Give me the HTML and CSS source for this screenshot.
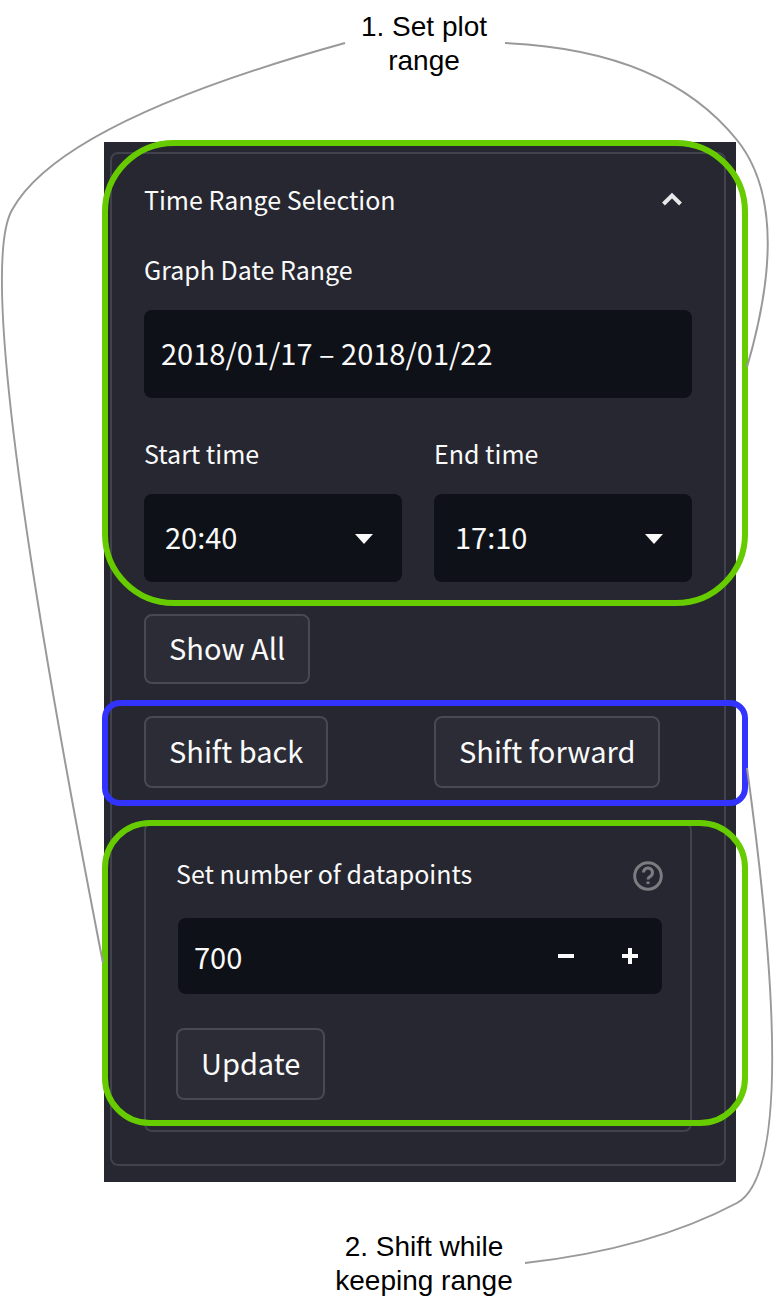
FILE: index.html
```html
<!DOCTYPE html>
<html lang="en">
<head>
<meta charset="utf-8">
<title>Time Range Selection</title>
<link rel="stylesheet" href="styles.css">
</head>
<body>
<main class="diagram">
  <p class="note note-top">1. Set plot range</p>

  <div class="sidebar">
    <details class="expander" open>
      <summary class="expander-head">
        <span>Time Range Selection</span>
        <svg class="chevron" viewBox="0 0 24 16" aria-hidden="true"><path d="M3.5 13 12 4.500l8.500 8.500" /></svg>
      </summary>

      <div class="expander-body">
        <section class="group">
          <label class="label" for="dates">Graph Date Range</label>
          <input class="field date-field" id="dates" type="text" value="2018/01/17 – 2018/01/22">
          <div class="columns times">
            <div>
              <label class="label" for="start">Start time</label>
              <div class="select-wrap">
                <select class="field select-field" id="start"><option>20:40</option></select>
                <svg class="caret" viewBox="0 0 20 12" aria-hidden="true"><path d="M1 1h18l-9 10z" /></svg>
              </div>
            </div>
            <div>
              <label class="label" for="end">End time</label>
              <div class="select-wrap">
                <select class="field select-field" id="end"><option>17:10</option></select>
                <svg class="caret" viewBox="0 0 20 12" aria-hidden="true"><path d="M1 1h18l-9 10z" /></svg>
              </div>
            </div>
          </div>
          <span class="frame frame-range"></span>
        </section>

        <button class="button button-short" type="button">Show All</button>

        <section class="group columns">
          <div><button class="button" type="button">Shift back</button></div>
          <div><button class="button" type="button">Shift forward</button></div>
          <span class="frame frame-shift"></span>
        </section>

        <form class="group points">
          <div class="points-head">
            <label class="label" for="points">Set number of datapoints</label>
            <svg class="help" viewBox="0 0 32 32" role="img" aria-label="Help">
              <circle cx="16" cy="16" r="13.300" />
              <path d="M11.500 12.500a4.500 4.500 0 1 1 6.800 3.900c-1.700 1-2.300 1.600-2.300 3.100" />
              <path d="M16 21.500v2.600" />
            </svg>
          </div>
          <div class="number">
            <input class="number-input" id="points" type="text" inputmode="numeric" value="700">
            <button class="step" type="button" aria-label="Decrease">
              <svg viewBox="0 0 18 18" aria-hidden="true"><path d="M1 9h16" /></svg>
            </button>
            <button class="step" type="button" aria-label="Increase">
              <svg viewBox="0 0 18 18" aria-hidden="true"><path d="M1 9h16M9 1v16" /></svg>
            </button>
          </div>
          <button class="button" type="button">Update</button>
          <span class="frame frame-points"></span>
        </form>
      </div>
    </details>
  </div>

  <p class="note note-bottom">2. Shift while keeping range</p>

  <svg class="connectors" viewBox="0 0 774 1306" aria-hidden="true">
    <path d="M345 43Q60 122 12 210Q-30 283 103 963" />
    <path d="M505 43Q665 50 737 140Q793 210 747 367" />
    <path d="M747 768Q802 1167 737 1203Q650 1249 525 1263" />
  </svg>
</main>
</body>
</html>
```
FILE: styles.css
```css
* {
  box-sizing: border-box;
}

body {
  margin: 0;
  background: #fff;
  color: #fafafa;
  font-family: "Noto Sans CJK SC", "Noto Sans", sans-serif;
  font-size: 25px;
}

.diagram {
  position: relative;
  padding: 10px 30px 8px 104px;
}

.note {
  width: 184px;
  margin: 0 auto;
  color: #000;
  font: 28px/34px "Liberation Sans", Arial, sans-serif;
  text-align: center;
}

.note-top {
  padding: 0 20px;
  margin-bottom: 64px;
}

.note-bottom {
  margin-top: 48px;
}

.sidebar {
  margin-right: 8px;
  padding: 10px 10px 16px 6px;
  background: #262730;
}

.expander {
  border: 2px solid #41424b;
  border-radius: 8px;
}

.expander-head {
  display: flex;
  align-items: center;
  justify-content: space-between;
  height: 94px;
  padding: 0 40px 4px 32px;
  list-style: none;
}

.chevron {
  width: 24px;
  height: 16px;
  fill: none;
  stroke: #e8e8ea;
  stroke-width: 4;
}

.expander-body {
  padding: 0 32px 32px;
}

.group {
  position: relative;
}

.label {
  display: block;
  margin-bottom: 20px;
  line-height: 42px;
}

.field {
  display: block;
  width: 100%;
  height: 88px;
  border: 0;
  border-radius: 8px;
  background: #0e1117;
  color: inherit;
  font: inherit;
  font-size: 29px;
  appearance: none;
}

.date-field {
  padding: 0 17px 4px;
}

.select-field {
  padding: 0 48px 4px 21px;
}

.columns {
  display: grid;
  grid-template-columns: 1fr 1fr;
  gap: 32px;
}

.times {
  margin-top: 34px;
}

.select-wrap {
  position: relative;
}

.caret {
  position: absolute;
  top: 39px;
  right: 28px;
  width: 20px;
  height: 12px;
  fill: #fafafa;
  pointer-events: none;
}

.button {
  display: block;
  height: 72px;
  padding: 0 23px 5px;
  border: 2px solid #484953;
  border-radius: 8px;
  background: #2b2c36;
  color: inherit;
  font: inherit;
  font-size: 29px;
}

.button-short {
  height: 70px;
  margin: 32px 0;
}

.points {
  margin-top: 34px;
  padding: 28px 28px 30px 30px;
  border: 2px solid #41424b;
  border-radius: 8px;
}

.points-head {
  display: flex;
  justify-content: space-between;
}

.points-head .label {
  margin-bottom: 24px;
}

.help {
  width: 32px;
  height: 32px;
  margin: 8px -2px 0 0;
  fill: none;
  stroke: #7b7c82;
  stroke-width: 3;
}

.number {
  display: flex;
  height: 76px;
  margin: 0 0 34px 2px;
  border-radius: 8px;
  background: #0e1117;
}

.number-input {
  flex: 1;
  min-width: 0;
  padding: 0 0 0 16px;
  border: 0;
  background: none;
  color: inherit;
  font: inherit;
  font-size: 29px;
}

.step {
  display: grid;
  place-items: center;
  width: 64px;
  padding: 0;
  border: 0;
  background: none;
}

.step svg {
  width: 18px;
  height: 18px;
  stroke: #fafafa;
  stroke-width: 4;
}

.frame {
  position: absolute;
  border: 6px solid #6c0;
  pointer-events: none;
}

.frame-range {
  inset: -108px -56px -24px -42px;
  border-radius: 72px;
}

.frame-shift {
  inset: -16px -56px -18px -42px;
  border-color: #33f;
  border-radius: 18px;
}

.frame-points {
  inset: -4px -58px 4px -44px;
  border-radius: 48px;
}

.connectors {
  position: absolute;
  top: 0;
  left: 0;
  width: 100%;
  fill: none;
  stroke: #999;
  stroke-width: 2;
  pointer-events: none;
}
```
